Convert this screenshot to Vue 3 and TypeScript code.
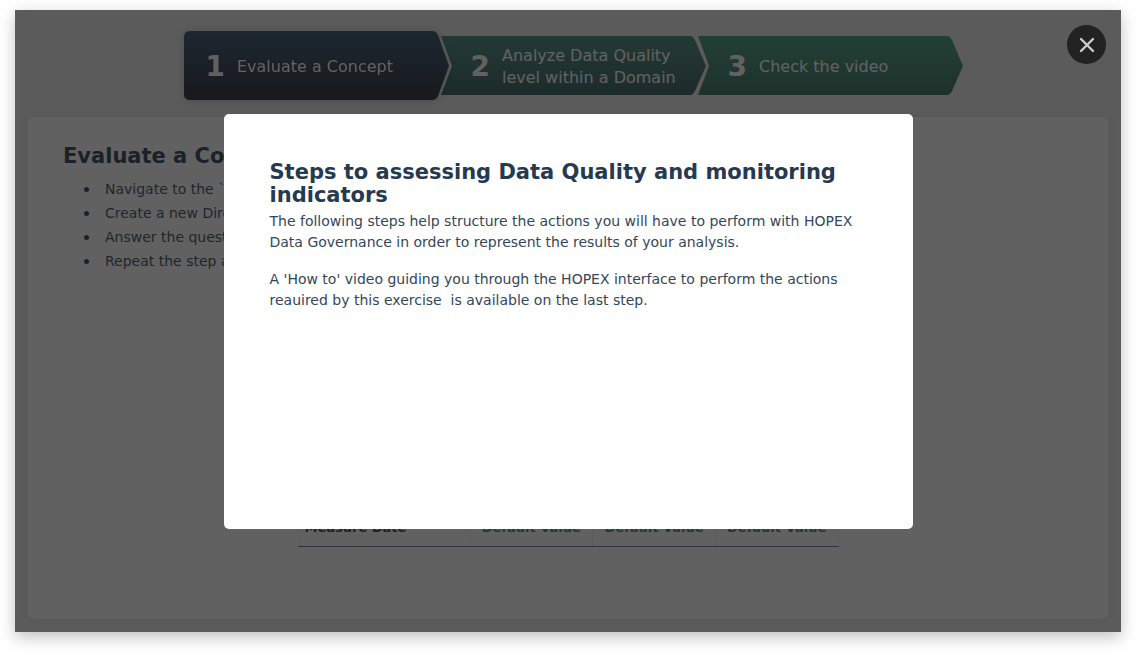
<script setup lang="ts">
import { ref } from 'vue'

interface Step {
  id: number
  label: string
  top: string
  bottom: string
}

const steps: Step[] = [
  { id: 1, label: 'Evaluate a Concept', top: '#2c4b6a', bottom: '#1e2129' },
  { id: 2, label: 'Analyze Data Quality level within a Domain', top: '#3f8477', bottom: '#2c5855' },
  { id: 3, label: 'Check the video', top: '#3f9777', bottom: '#2c6b58' },
]

const firstShape = 'M6 0H248Q252 0 254 4L265 35L254 65Q252 69 248 69H6Q0 69 0 63V6Q0 0 6 0Z'
const nextShape = 'M0 0H249Q252 0 254 4L265 30L254 55Q252 59 249 59H0L11 30Z'

const actions: string[] = [
  'Navigate to the `D',
  'Create a new Dire',
  'Answer the questi',
  'Repeat the step ab',
]

const values: string[] = ['Default Value', 'Default Value', 'Default Value']

const current = ref(1)
const open = ref(true)
</script>

<template>
  <div class="page">
    <main class="stage">
      <nav class="steps" aria-label="Steps">
        <button
          v-for="step in steps"
          :key="step.id"
          type="button"
          class="step"
          :class="{ current: step.id === current }"
          @click="current = step.id"
        >
          <svg
            class="arrow"
            :viewBox="step.id === 1 ? '0 0 265 69' : '0 0 265 59'"
            preserveAspectRatio="none"
            aria-hidden="true"
          >
            <defs>
              <linearGradient :id="'fill-' + step.id" x1="0" y1="0" x2="0" y2="1">
                <stop offset="0" :stop-color="step.top" />
                <stop offset="1" :stop-color="step.bottom" />
              </linearGradient>
            </defs>
            <path
              :d="step.id === 1 ? firstShape : nextShape"
              :fill="'url(#fill-' + step.id + ')'"
            />
          </svg>
          <span class="caption">
            <span class="number">{{ step.id }}</span>
            <span class="label">{{ step.label }}</span>
          </span>
        </button>
      </nav>

      <section class="panel">
        <h2 class="title">Evaluate a Concept</h2>
        <ul class="actions">
          <li v-for="action in actions" :key="action">{{ action }}</li>
        </ul>
        <table class="measures">
          <tbody>
            <tr>
              <th scope="row">Measure Date</th>
              <td v-for="(value, i) in values" :key="i">{{ value }}</td>
            </tr>
          </tbody>
        </table>
      </section>

      <div v-if="open" class="overlay">
        <div class="dialog" role="dialog" aria-modal="true" aria-labelledby="dialog-title">
          <h1 id="dialog-title" class="title">
            Steps to assessing Data Quality and monitoring indicators
          </h1>
          <p>
            The following steps help structure the actions you will have to perform with HOPEX
            Data Governance in order to represent the results of your analysis.
          </p>
          <p>
            A 'How to' video guiding you through the HOPEX interface to perform the actions
            reauired by this exercise&nbsp; is available on the last step.
          </p>
        </div>
        <button type="button" class="close" aria-label="Close" @click="open = false">
          <svg viewBox="0 0 16 16" width="16" height="16" aria-hidden="true">
            <path d="M2 2L14 14M14 2L2 14" />
          </svg>
        </button>
      </div>
    </main>
  </div>
</template>

<style>
body {
  margin: 0;
  background: #fff;
}
</style>

<style scoped>
.page {
  box-sizing: border-box;
  display: flex;
  min-height: 100vh;
  padding: 10px 15px 21px;
  font-family: 'DejaVu Sans', Verdana, sans-serif;
  color: #26394f;
}

.stage {
  position: relative;
  flex: 1;
  display: flex;
  flex-direction: column;
  padding: 21px 13px 13px;
  box-sizing: border-box;
  background: #ececec;
  box-shadow: 0 5px 15px rgba(0, 0, 0, 0.25);
}

.steps {
  display: flex;
  justify-content: center;
  align-items: center;
  min-height: 69px;
  margin-left: 10px;
}

.step {
  display: grid;
  width: 265px;
  height: 59px;
  margin: 0 0 0 -8px;
  padding: 0;
  border: 0;
  background: none;
  color: #fff;
  font: inherit;
  text-align: left;
  cursor: pointer;
}

.step:first-child {
  margin-left: 0;
}

.step.current {
  height: 69px;
  filter: drop-shadow(0 1px 4px rgba(0, 0, 0, 0.2));
}

.arrow {
  grid-area: 1 / 1;
  width: 100%;
  height: 100%;
}

.caption {
  grid-area: 1 / 1;
  display: flex;
  align-items: center;
  gap: 12px;
  padding: 2px 10px 0 30px;
}

.step:first-child .caption {
  padding-left: 22px;
}

.number {
  font-size: 28px;
  font-weight: 700;
}

.label {
  max-width: 185px;
  font-size: 16px;
  line-height: 22px;
}

.panel {
  flex: 1;
  display: flex;
  flex-direction: column;
  margin-top: 17px;
  padding: 28px 35px 72px;
  border-radius: 5px;
  background: #fff;
  box-shadow: 0 0 10px rgba(0, 0, 0, 0.08);
}

.title {
  margin: 0;
  font-size: 21px;
  line-height: 23px;
  font-weight: 700;
}

.actions {
  margin: 9px 0 0;
  padding-left: 21px;
  list-style: none;
  font-size: 14px;
  line-height: 24px;
  color: #34465a;
}

.actions li {
  display: flex;
  align-items: center;
  gap: 16px;
}

.actions li::before {
  content: '';
  width: 5px;
  height: 5px;
  border-radius: 50%;
  background: #26394f;
}

.measures {
  align-self: center;
  width: 541px;
  margin-top: auto;
  border-collapse: collapse;
  table-layout: fixed;
  font-size: 13px;
  line-height: 18px;
  font-weight: 700;
}

.measures th,
.measures td {
  padding: 9px 0;
  border: 1px solid #f0f0f0;
  border-bottom-color: #5f7488;
  text-align: center;
}

.measures th {
  width: 165px;
  padding-left: 6px;
  text-align: left;
}

.measures td {
  color: #2f8f60;
}

.overlay {
  position: absolute;
  inset: 0;
  display: flex;
  align-items: center;
  justify-content: center;
  background: rgba(22, 22, 22, 0.68);
}

.dialog {
  box-sizing: border-box;
  width: 689px;
  max-width: 90%;
  min-height: 415px;
  padding: 47px 46px;
  border-radius: 5px;
  background: #fff;
}

.dialog p {
  margin: 4px 0 16px;
  font-size: 14px;
  line-height: 21px;
  color: #34465a;
}

.dialog p + p {
  margin-top: 16px;
}

.close {
  position: absolute;
  top: 15px;
  right: 15px;
  display: grid;
  place-items: center;
  width: 39px;
  height: 39px;
  padding: 0;
  border: 0;
  border-radius: 50%;
  background: #222;
  cursor: pointer;
}

.close path {
  fill: none;
  stroke: #ccc;
  stroke-width: 2.4;
  stroke-linecap: round;
}
</style>
